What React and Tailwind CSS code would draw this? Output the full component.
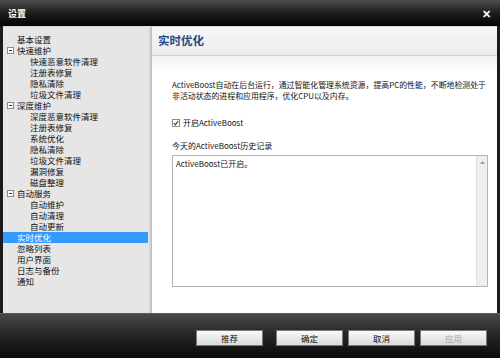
import React from "react";

const tree = [
  { t: "基本设置", l: 0 },
  { t: "快速维护", l: 0, box: true },
  { t: "快速恶意软件清理", l: 1 },
  { t: "注册表修复", l: 1 },
  { t: "隐私清除", l: 1 },
  { t: "垃圾文件清理", l: 1 },
  { t: "深度维护", l: 0, box: true },
  { t: "深度恶意软件清理", l: 1 },
  { t: "注册表修复", l: 1 },
  { t: "系统优化", l: 1 },
  { t: "隐私清除", l: 1 },
  { t: "垃圾文件清理", l: 1 },
  { t: "漏洞修复", l: 1 },
  { t: "磁盘整理", l: 1 },
  { t: "自动服务", l: 0, box: true },
  { t: "自动维护", l: 1 },
  { t: "自动清理", l: 1 },
  { t: "自动更新", l: 1 },
  { t: "实时优化", l: 0, sel: true },
  { t: "忽略列表", l: 0 },
  { t: "用户界面", l: 0 },
  { t: "日志与备份", l: 0 },
  { t: "通知", l: 0 },
];

function Btn({ children, disabled, className = "" }) {
  return (
    <div
      className={
        "w-[67px] h-[16px] flex items-center justify-center border border-[#7a7a7a] bg-gradient-to-b from-[#fafafa] to-[#d9d9d9] text-[8.5px] leading-none " +
        (disabled ? "text-[#a8a8a8] " : "text-[#111] ") +
        className
      }
    >
      {children}
    </div>
  );
}

export default function App() {
  return (
    <div
      className="w-[500px] h-[358px] flex flex-col bg-[#1b1b1b] overflow-hidden"
      style={{ fontFamily: '"Noto Sans CJK SC", "Noto Sans", sans-serif' }}
    >
      {/* title bar */}
      <div className="h-[26px] shrink-0 flex items-center justify-between pl-[8px] pr-[9px] bg-gradient-to-b from-[#4d4d4d] via-[#1e1e1e] to-[#050505]">
        <span className="text-white font-bold text-[9px] leading-none">设置</span>
        <span className="text-white font-bold text-[11px] leading-none">✕</span>
      </div>

      {/* body */}
      <div className="flex-1 flex mx-[3px] min-h-0 border-t border-[#d8d8d8]">
        {/* left tree */}
        <div className="w-[146px] shrink-0 bg-[#e6e6e6] pt-[7px] text-[8.5px] text-[#111]">
          {tree.map((it, i) => (
            <div
              key={i}
              className={
                "h-[11px] flex items-center leading-none " +
                (it.sel ? "bg-[#3399ff] text-white mr-[1px]" : "")
              }
            >
              <div className="w-[14px] shrink-0 flex justify-center">
                {it.box && (
                  <div className="w-[7px] h-[7px] border border-[#8c8c8c] bg-white flex items-center justify-center">
                    <div className="w-[3px] h-[1px] bg-[#333]" />
                  </div>
                )}
              </div>
              <span className={it.l === 1 ? "pl-[13px]" : ""}>{it.t}</span>
            </div>
          ))}
        </div>
        <div className="w-[3px] shrink-0 bg-[#d4d4d4] border-r border-[#bdbdbd]" />

        {/* right panel */}
        <div className="flex-1 flex flex-col bg-white min-w-0">
          <div className="h-[29px] shrink-0 flex items-center pl-[6px] bg-gradient-to-b from-[#f7f7f7] to-[#ececec] border-b border-[#cfcfcf]">
            <span className="text-[11.5px] font-bold text-[#1e4a86] leading-none">实时优化</span>
          </div>
          <div className="flex-1 flex flex-col pl-[20px] pr-[9px] bg-gradient-to-b from-[#f1f1f1] via-white to-white [background-size:100%_30px] bg-no-repeat">
            <p className="mt-[23px] text-[7.9px] leading-[11px] text-[#111] -mr-[4px] whitespace-nowrap">
              ActiveBoost自动在后台运行，通过智能化管理系统资源，提高PC的性能，不断地检测处于
              <br />
              非活动状态的进程和应用程序，优化CPU以及内存。
            </p>
            <div className="mt-[18px] flex items-center gap-[3px] text-[8px] leading-none text-[#111]">
              <div className="w-[8px] h-[8px] border border-[#8a8a8a] bg-white flex items-center justify-center">
                <svg width="6" height="6" viewBox="0 0 6 6">
                  <path d="M0.8 3.2 L2.4 4.8 L5.2 1" stroke="#333" strokeWidth="1.1" fill="none" />
                </svg>
              </div>
              <span>开启ActiveBoost</span>
            </div>
            <div className="mt-[15px] text-[8px] leading-none text-[#111]">今天的ActiveBoost历史记录</div>
            <div className="mt-[5px] h-[132px] flex border border-[#b5b5b5]">
              <div className="flex-1 pl-[3px] pt-[4px] text-[8px] leading-none text-[#111]">ActiveBoost已开启。</div>
              <div className="w-[11px] bg-[#efefef] border-l border-[#e0e0e0] flex justify-center pt-[5px]">
                <svg width="5" height="3" viewBox="0 0 5 3">
                  <path d="M0 3 L2.5 0 L5 3 Z" fill="#9a9a9a" />
                </svg>
              </div>
            </div>
          </div>
        </div>
      </div>

      {/* bottom bar */}
      <div className="h-[45px] shrink-0 flex pt-[16px] pl-[196px] bg-gradient-to-b from-[#4a4a4a] via-[#232323] to-[#0c0c0c] border-t border-[#5a5a5a]">
        <Btn>推荐</Btn>
        <Btn className="ml-[13px]">确定</Btn>
        <Btn className="ml-[5px]">取消</Btn>
        <Btn className="ml-[5px]" disabled>应用</Btn>
      </div>
    </div>
  );
}
